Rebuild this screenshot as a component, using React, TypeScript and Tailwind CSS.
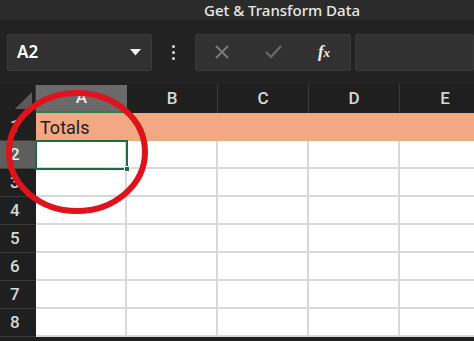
import React from "react";

const cols = ["A", "B", "C", "D", "E"];
const rows = [1, 2, 3, 4, 5, 6, 7, 8];

const App = () => {
  return (
    <div
      className="relative w-[474px] h-[341px] overflow-hidden bg-[#1f1f1f]"
      style={{ fontFamily: "'Noto Sans', 'Open Sans', sans-serif" }}
    >
      {/* Title bar */}
      <div className="h-[20px] bg-[#2b2b2b] flex items-center pl-[204px] text-[15px] font-medium text-[#e8e8e8] leading-none">
        Get &amp; Transform Data
      </div>

      {/* Formula bar */}
      <div className="h-[64px] bg-[#222222] flex items-center pl-[7px]">
        <div className="w-[145px] h-[37px] rounded-[2px] bg-[#313131] border border-[#3a3a3a] flex items-center justify-between pl-[9px] pr-[10px]">
          <span className="text-[17px] text-white font-semibold">A2</span>
          <svg width="11" height="7" viewBox="0 0 11 7">
            <path d="M0 0 L11 0 L5.5 6.5 Z" fill="#f2f2f2" />
          </svg>
        </div>
        <div className="w-[43px] flex flex-col items-center gap-[3px]">
          <div className="w-[3px] h-[3px] bg-[#e0e0e0] rounded-full" />
          <div className="w-[3px] h-[3px] bg-[#e0e0e0] rounded-full" />
          <div className="w-[3px] h-[3px] bg-[#e0e0e0] rounded-full" />
        </div>
        <div className="w-[156px] h-[37px] rounded-[2px] bg-[#313131] border border-[#3a3a3a] flex items-center">
          <div className="w-[52px] flex justify-center">
            <svg width="14" height="14" viewBox="0 0 14 14">
              <path d="M1 1 L13 13 M13 1 L1 13" stroke="#7a7a7a" strokeWidth="2" />
            </svg>
          </div>
          <div className="w-[50px] flex justify-center">
            <svg width="17" height="14" viewBox="0 0 17 14">
              <path d="M1 7 L6 12 L16 1" stroke="#6a6a6a" strokeWidth="2.2" fill="none" />
            </svg>
          </div>
          <div className="w-[52px] flex justify-center">
            <span
              className="text-[17px] text-[#f0f0f0] italic font-bold"
              style={{ fontFamily: "'Liberation Serif', serif" }}
            >
              f<span className="text-[13px]">x</span>
            </span>
          </div>
        </div>
        <div className="ml-[4px] flex-1 h-[37px] rounded-[2px] bg-[#313131] border border-[#3a3a3a]" />
      </div>

      {/* Sheet grid */}
      <div
        className="grid grid-cols-[36px_91px_91px_91px_91px_91px] grid-rows-[29px_repeat(8,28px)]"
        style={{ fontFamily: "'Roboto', 'Liberation Sans', sans-serif" }}
      >
        {/* Corner */}
        <div className="bg-[#1f1f1f] relative border-r border-[#3a3a3a]">
          <svg className="absolute right-[3px] bottom-[4px]" width="17" height="17" viewBox="0 0 17 17">
            <path d="M17 0 L17 17 L0 17 Z" fill="#5a5a5a" />
          </svg>
        </div>
        {cols.map((c) => (
          <div
            key={c}
            className={
              c === "A"
                ? "mt-[1px] bg-[#6a6a6a] border-b-2 border-[#2e7d4a] flex items-center justify-center text-[17px] font-medium text-[#ececec]"
                : "bg-[#1f1f1f] border-r border-[#3c3c3c] flex items-center justify-center text-[17px] font-medium text-[#d8d8d8]"
            }
          >
            {c}
          </div>
        ))}

        {rows.map((r) => (
          <React.Fragment key={r}>
            <div
              className={
                r === 2
                  ? "bg-[#5e5e5e] border-b border-[#444] flex items-center pl-[10px] text-[17px] font-medium text-[#ececec]"
                  : "bg-[#1f1f1f] border-b border-[#3a3a3a] flex items-center pl-[10px] text-[17px] font-medium text-[#d8d8d8]"
              }
            >
              {r}
            </div>
            {cols.map((c) =>
              r === 1 ? (
                <div
                  key={c}
                  className="bg-[#f2a883] flex items-center pl-[4px] text-[18px] text-[#1d1d1d]"
                >
                  {c === "A" ? "Totals" : ""}
                </div>
              ) : (
                <div
                  key={c}
                  className={
                    r === 2 && c === "A"
                      ? "relative z-10 bg-white border-r-2 border-b-2 border-[#d9d9d9]"
                      : "relative bg-white border-r-2 border-b-2 border-[#d9d9d9]"
                  }
                >
                  {r === 2 && c === "A" && (
                    <div className="absolute -left-[1px] -top-[1px] w-[93px] h-[30px] border-2 border-[#1e6b3c]">
                      <div className="absolute -right-[4px] -bottom-[4px] w-[6px] h-[6px] bg-[#1e6b3c] border border-white" />
                    </div>
                  )}
                </div>
              )
            )}
          </React.Fragment>
        ))}
      </div>

      {/* Red circle annotation */}
      <svg className="absolute left-0 top-0 z-20" width="474" height="341" viewBox="0 0 474 341">
        <ellipse
          cx="77"
          cy="152"
          rx="68"
          ry="59"
          fill="none"
          stroke="#e0121b"
          strokeWidth="6"
        />
      </svg>
    </div>
  );
};

export default App;
